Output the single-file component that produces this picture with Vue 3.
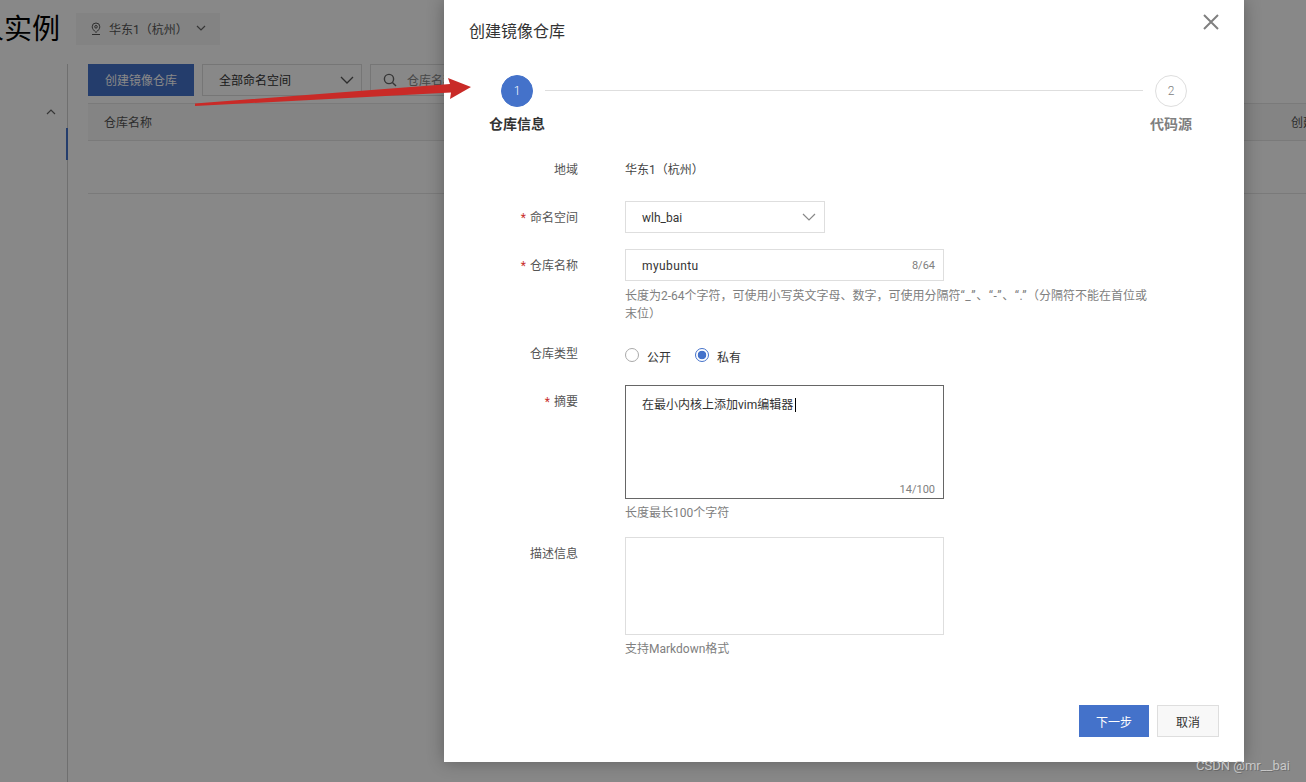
<template>
  <div class="page">
    <div class="top-bar">
      <h1 class="page-title">个人实例</h1>
      <div class="region-pick">
        <svg class="pin" width="12" height="14" viewBox="0 0 12 14" fill="none" stroke="#555" stroke-width="1">
          <path d="M6 10.5C3.8 8.4 2.2 6.8 2.2 4.8a3.8 3.8 0 0 1 7.6 0c0 2-1.6 3.6-3.8 5.7z" />
          <circle cx="6" cy="4.8" r="1.3" />
          <path d="M2 12.5h8" />
        </svg>
        <span class="lift">华东1（杭州）</span>
        <svg class="chev" width="10" height="6" viewBox="0 0 10 6" fill="none" stroke="#666" stroke-width="1.2"><path d="M1 1l4 4 4-4" /></svg>
      </div>
    </div>
    <div class="body">
      <aside class="side">
        <svg class="side-chev" width="10" height="6" viewBox="0 0 10 6" fill="none" stroke="#666" stroke-width="1.2"><path d="M1 5l4-4 4 4" /></svg>
        <div class="side-mark"></div>
      </aside>
      <main class="content">
        <div class="tools">
          <button class="create-btn">创建镜像仓库</button>
          <div class="ns-pick">
            <span class="lift">全部命名空间</span>
            <svg width="14" height="8" viewBox="0 0 14 8" fill="none" stroke="#555" stroke-width="1.3"><path d="M1 1l6 6 6-6" /></svg>
          </div>
          <div class="search-box">
            <svg width="14" height="14" viewBox="0 0 14 14" fill="none" stroke="#666" stroke-width="1.4"><circle cx="6" cy="6" r="4.6" /><path d="M9.4 9.4L13 13" /></svg>
            <span class="lift">仓库名称</span>
          </div>
        </div>
        <div class="table-head">
          <span class="lift">仓库名称</span>
          <span class="col-end lift">创建时间</span>
        </div>
        <div class="table-row"></div>
      </main>
    </div>

    <div class="mask"></div>

    <section class="modal">
      <header class="modal-head">
        <span>创建镜像仓库</span>
        <svg class="close" width="16" height="16" viewBox="0 0 16 16" stroke="#808080" stroke-width="2"><path d="M1 1l14 14M15 1L1 15" /></svg>
      </header>

      <div class="steps">
        <div class="step active">
          <div class="step-dot">1</div>
          <div class="step-name">仓库信息</div>
        </div>
        <div class="step-line"></div>
        <div class="step">
          <div class="step-dot">2</div>
          <div class="step-name">代码源</div>
        </div>
      </div>

      <div class="form">
        <div class="row">
          <label class="row-label">地域</label>
          <div class="row-value plain">华东1（杭州）</div>
        </div>
        <div class="row">
          <label class="row-label"><i>*</i>命名空间</label>
          <div class="row-value">
            <div class="field select">
              <span class="typed">wlh_bai</span>
              <svg width="14" height="8" viewBox="0 0 14 8" fill="none" stroke="#888" stroke-width="1.2"><path d="M1 1l6 6 6-6" /></svg>
            </div>
          </div>
        </div>
        <div class="row">
          <label class="row-label"><i>*</i>仓库名称</label>
          <div class="row-value">
            <div class="field wide">
              <span class="typed spaced">myubuntu</span>
              <em>8/64</em>
            </div>
            <p class="help two-line">长度为2-64个字符，可使用小写英文字母、数字，可使用分隔符<span class="quotes">“_”、“-”、“.”</span>（分隔符不能在首位或末位）</p>
          </div>
        </div>
        <div class="row radio-row">
          <label class="row-label">仓库类型</label>
          <div class="row-value radios">
            <span class="radio"><b class="ring"></b>公开</span>
            <span class="radio on"><b class="ring"></b>私有</span>
          </div>
        </div>
        <div class="row">
          <label class="row-label"><i>*</i>摘要</label>
          <div class="row-value">
            <div class="area focus">
              <span class="area-text">在最小内核上添加vim编辑器<u class="caret"></u></span>
              <em>14/100</em>
            </div>
            <p class="help">长度最长100个字符</p>
          </div>
        </div>
        <div class="row">
          <label class="row-label">描述信息</label>
          <div class="row-value">
            <div class="area short"></div>
            <p class="help">支持Markdown格式</p>
          </div>
        </div>
      </div>

      <footer class="modal-foot">
        <button class="next">下一步</button>
        <button class="cancel">取消</button>
      </footer>
    </section>

    <svg class="arrow" width="480" height="110" viewBox="0 0 480 110">
      <polygon points="195,103.5 450,84 448,78 471,87 450,99 451,92.5 195,106" fill="#c92a27" />
    </svg>

    <div class="mark">CSDN @mr__bai</div>
  </div>
</template>

<script setup>
</script>

<style>
html,
body {
  margin: 0;
  overflow: hidden;
}
</style>

<style scoped>
.page {
  position: relative;
  width: 1306px;
  height: 782px;
  overflow: hidden;
  background: #fff;
  font-family: Roboto, "Noto Sans CJK SC", sans-serif;
  font-size: 12px;
  color: #333;
  text-spacing-trim: space-all;
}
.top-bar {
  display: flex;
  align-items: center;
  height: 60px;
  padding-bottom: 2px;
  box-sizing: border-box;
}
.page-title {
  margin: 2px 0 0 -52px;
  font-size: 28px;
  font-weight: 400;
  color: #000;
  line-height: 36px;
  width: 128px;
  flex: none;
}
.lift {
  padding-bottom: 2px;
}
.region-pick {
  display: flex;
  align-items: center;
  width: 144px;
  height: 32px;
  box-sizing: border-box;
  padding-left: 14px;
  background: #f5f5f5;
  color: #555;
}
.pin {
  margin-right: 7px;
}
.chev {
  margin-left: 8px;
  margin-top: -2px;
}
.body {
  display: flex;
  margin-top: 4px;
  height: 718px;
}
.side {
  position: relative;
  width: 68px;
  box-sizing: border-box;
  border-right: 1px solid #d0d0d0;
  flex: none;
}
.side-chev {
  position: absolute;
  left: 46px;
  top: 45px;
}
.side-mark {
  position: absolute;
  right: -1px;
  top: 64px;
  width: 2px;
  height: 32px;
  background: #4472ca;
}
.content {
  flex: 1;
  padding-left: 20px;
}
.tools {
  display: flex;
  gap: 8px;
  height: 32px;
}
.create-btn {
  width: 106px;
  height: 32px;
  padding: 0 0 1px;
  border: 0;
  background: #4472ca;
  color: #fff;
  font: inherit;
}
.ns-pick {
  display: flex;
  align-items: center;
  justify-content: space-between;
  width: 160px;
  height: 32px;
  box-sizing: border-box;
  padding: 0 7px 0 16px;
  border: 1px solid #dedede;
  color: #333;
}
.search-box {
  display: flex;
  align-items: center;
  gap: 10px;
  width: 300px;
  height: 32px;
  box-sizing: border-box;
  padding-left: 12px;
  border: 1px solid #dedede;
  color: #888;
}
.table-head {
  display: flex;
  align-items: center;
  justify-content: space-between;
  height: 38px;
  margin-top: 7px;
  padding-left: 16px;
  border-top: 1px solid #e4e4e4;
  border-bottom: 1px solid #e4e4e4;
  box-sizing: border-box;
  background: #f7f7f7;
  color: #555;
}
.col-end {
  width: 15px;
  overflow: hidden;
  white-space: nowrap;
}
.table-row {
  height: 53px;
  box-sizing: border-box;
  border-bottom: 1px solid #e4e4e4;
}
.mask {
  position: absolute;
  inset: 0;
  background: rgba(0, 0, 0, 0.467);
}
.modal {
  position: absolute;
  left: 444px;
  top: 0;
  width: 800px;
  height: 762px;
  background: #fff;
  box-shadow: 0 0 16px rgba(0, 0, 0, 0.3);
}
.modal-head {
  display: flex;
  align-items: center;
  justify-content: space-between;
  height: 62px;
  padding: 0 25px;
  font-size: 16px;
  color: #333;
}
.modal-head span {
  margin-top: -2px;
}
.close {
  margin-top: -18px;
}
.steps {
  display: flex;
  align-items: flex-start;
  height: 79px;
  margin-top: 13px;
  padding: 0 52px 0 45px;
}
.step {
  display: flex;
  flex-direction: column;
  align-items: center;
  flex: none;
}
.step-dot {
  width: 32px;
  height: 32px;
  box-sizing: border-box;
  border: 1px solid #dedede;
  border-radius: 50%;
  text-align: center;
  line-height: 30px;
  font-weight: 300;
  color: #808080;
}
.step-name {
  margin-top: 8px;
  font-size: 14px;
  font-weight: 700;
  line-height: 18px;
  color: #808080;
}
.step.active .step-dot {
  background: #4472ca;
  border-color: #4472ca;
  color: #fff;
}
.step.active .step-name {
  color: #333;
}
.step-line {
  flex: 1;
  height: 1px;
  margin: 15px 7px 0 0;
  background: #dedede;
}
.form {
  display: flex;
  flex-direction: column;
  gap: 16px;
  margin-top: -1px;
  padding-top: 0;
}
.row {
  display: flex;
  align-items: flex-start;
}
.row-label {
  width: 134px;
  height: 32px;
  flex: none;
  text-align: right;
  line-height: 34px;
  color: #555;
}
.row-label i {
  margin-right: 4px;
  font-style: normal;
  color: #c9302c;
}
.row-value {
  margin-left: 47px;
  width: 524px;
}
.plain {
  height: 32px;
  line-height: 34px;
  color: #444;
}
.field {
  display: flex;
  align-items: center;
  justify-content: space-between;
  height: 32px;
  box-sizing: border-box;
  padding: 0 8px 0 16px;
  border: 1px solid #dedede;
  color: #333;
}
.typed {
  padding-top: 2px;
}
.spaced {
  letter-spacing: 0.4px;
}
.select {
  width: 200px;
}
.wide {
  width: 319px;
}
em {
  font-style: normal;
  font-size: 11px;
  color: #808080;
}
.help {
  margin: 5px 0 -1px;
  line-height: 18px;
  color: #808080;
}
.two-line {
  margin: 6px 0 0;
  width: 524px;
}
.quotes {
  letter-spacing: 0.55px;
}
.radio-row {
  height: 30px;
}
.radio-row .row-label {
  line-height: 30px;
}
.radios {
  display: flex;
  align-items: center;
  gap: 24px;
  height: 30px;
}
.radio {
  display: flex;
  align-items: flex-start;
  padding-top: 4px;
  color: #333;
}
.ring {
  width: 14px;
  height: 14px;
  box-sizing: border-box;
  margin-right: 8px;
  border: 1px solid #aaa;
  border-radius: 50%;
  background: #fff;
}
.radio.on .ring {
  border-color: #4472ca;
  background: radial-gradient(circle, #4472ca 0 4px, #fff 4.6px);
}
.area {
  display: flex;
  flex-direction: column;
  justify-content: space-between;
  width: 319px;
  height: 114px;
  box-sizing: border-box;
  padding: 9px 8px 2px 16px;
  border: 1px solid #dedede;
}
.area.focus {
  border-color: #666;
}
.area.short {
  height: 98px;
}
.area em {
  align-self: flex-end;
}
.area-text {
  color: #333;
}
.caret {
  display: inline-block;
  width: 1px;
  height: 14px;
  margin-left: 2px;
  background: #000;
  vertical-align: -3px;
}
.modal-foot {
  display: flex;
  justify-content: flex-end;
  gap: 8px;
  margin-top: 48px;
  padding-right: 25px;
}
.modal-foot button {
  height: 32px;
  padding: 0;
  font: inherit;
}
.next {
  width: 70px;
  border: 0;
  background: #4472ca;
  color: #fff;
}
.cancel {
  width: 62px;
  border: 1px solid #dedede;
  background: #f8f8f8;
  color: #333;
}
.arrow {
  position: absolute;
  left: 0;
  top: 0;
}
.mark {
  position: absolute;
  right: 16px;
  bottom: 7px;
  font-size: 13px;
  line-height: 18px;
  color: #c8c8c8;
  text-shadow: 1px 1px 0 rgba(0, 0, 0, 0.2);
}
</style>
